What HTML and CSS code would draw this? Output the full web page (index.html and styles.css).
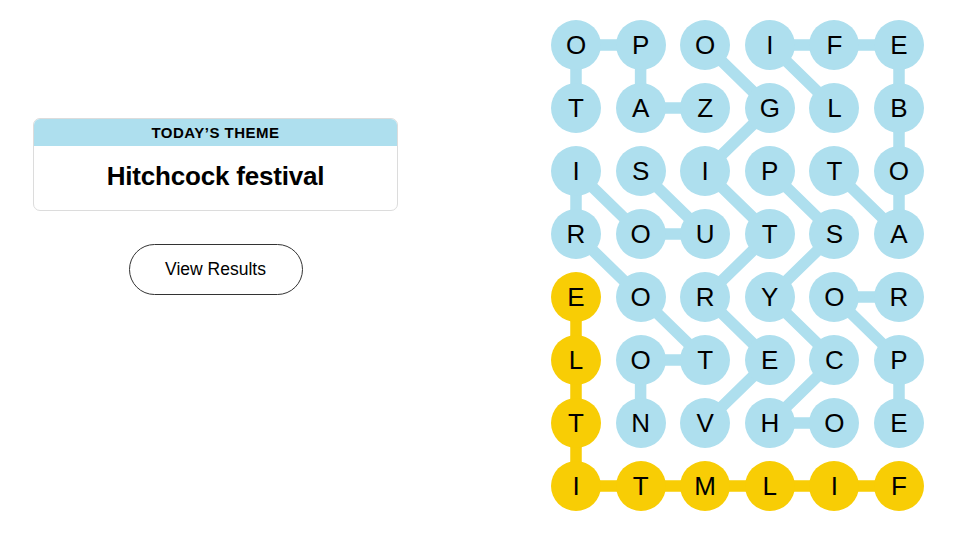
FILE: index.html
```html
<!DOCTYPE html>
<html lang="en">
  <head>
    <meta charset="UTF-8" />
    <meta name="viewport" content="width=device-width, initial-scale=1.0" />
    <title>Strands</title>
    <link rel="stylesheet" href="styles.css">
  </head>
  <body>
    <main class="game">
      <section class="side">
        <div class="theme-card">
          <h2 class="theme-label">TODAY’S THEME</h2>
          <h1 class="theme-title">Hitchcock festival</h1>
        </div>
        <button class="results-btn">View Results</button>
      </section>

      <section class="board">
        <!-- Found word paths, drawn behind the letters -->
        <svg class="paths" viewBox="0 0 373 491" aria-hidden="true">
          <g class="path-blue">
            <polyline points="25,88 25,25 89.6,25 89.6,88 154.2,88" />
            <polyline points="154.2,403 218.8,340 154.2,277 218.8,214 154.2,151 218.8,88 154.2,25" />
            <polyline points="283.4,88 218.8,25 283.4,25 348,25 348,88 348,151 348,214 283.4,151" />
            <polyline points="89.6,403 89.6,340 154.2,340 89.6,277 25,214 25,151 89.6,214 154.2,214 89.6,151" />
            <polyline points="218.8,151 283.4,214 218.8,277 283.4,340 218.8,403 283.4,403" />
            <polyline points="348,277 283.4,277 348,340 348,403" />
          </g>
          <g class="path-yellow">
            <polyline points="348,466 283.4,466 218.8,466 154.2,466 89.6,466 25,466 25,403 25,340 25,277" />
          </g>
        </svg>

        <div class="grid">
          <span class="cell found">O</span><span class="cell found">P</span><span class="cell found">O</span><span class="cell found">I</span><span class="cell found">F</span><span class="cell found">E</span>
          <span class="cell found">T</span><span class="cell found">A</span><span class="cell found">Z</span><span class="cell found">G</span><span class="cell found">L</span><span class="cell found">B</span>
          <span class="cell found">I</span><span class="cell found">S</span><span class="cell found">I</span><span class="cell found">P</span><span class="cell found">T</span><span class="cell found">O</span>
          <span class="cell found">R</span><span class="cell found">O</span><span class="cell found">U</span><span class="cell found">T</span><span class="cell found">S</span><span class="cell found">A</span>
          <span class="cell spangram">E</span><span class="cell found">O</span><span class="cell found">R</span><span class="cell found">Y</span><span class="cell found">O</span><span class="cell found">R</span>
          <span class="cell spangram">L</span><span class="cell found">O</span><span class="cell found">T</span><span class="cell found">E</span><span class="cell found">C</span><span class="cell found">P</span>
          <span class="cell spangram">T</span><span class="cell found">N</span><span class="cell found">V</span><span class="cell found">H</span><span class="cell found">O</span><span class="cell found">E</span>
          <span class="cell spangram">I</span><span class="cell spangram">T</span><span class="cell spangram">M</span><span class="cell spangram">L</span><span class="cell spangram">I</span><span class="cell spangram">F</span>
        </div>
      </section>
    </main>
  </body>
</html>
```

FILE: styles.css
```css
:root {
  --blue: #aedfee;
  --yellow: #f8cd05;
  --ink: #000;
  --border: #dcdcdc;
}

body {
  margin: 0;
  font-family: "Liberation Sans", Arial, sans-serif;
  color: var(--ink);
  background: #fff;
}

.game {
  display: flex;
  align-items: flex-start;
  padding: 20px 0 0 33px;
}

/* Left column: theme card + results button */
.side {
  width: 365px;
  padding-top: 98px;
  display: flex;
  flex-direction: column;
  align-items: center;
}

.theme-card {
  width: 100%;
  box-sizing: border-box;
  border: 1px solid var(--border);
  border-radius: 7px;
  overflow: hidden;
  text-align: center;
}

.theme-label {
  margin: 0;
  height: 27px;
  line-height: 28px;
  background: var(--blue);
  font-size: 15px;
  font-weight: 700;
  letter-spacing: 0.5px;
}

.theme-title {
  margin: 0;
  height: 64px;
  line-height: 60px;
  font-size: 26px;
  font-weight: 700;
  letter-spacing: -0.2px;
}

.results-btn {
  margin-top: 33px;
  width: 174px;
  height: 51px;
  border: 1px solid #333;
  border-radius: 26px;
  background: #fff;
  font-family: inherit;
  font-size: 17.5px;
  color: var(--ink);
  cursor: pointer;
}

/* Board */
.board {
  position: relative;
  margin-left: 153px;
  width: 373px;
  height: 491px;
}

.paths {
  position: absolute;
  inset: 0;
  width: 100%;
  height: 100%;
}

.paths polyline {
  fill: none;
  stroke-width: 11.5;
  stroke-linejoin: round;
  stroke-linecap: round;
}

.path-blue polyline {
  stroke: var(--blue);
}

.path-yellow polyline {
  stroke: var(--yellow);
}

.grid {
  position: relative;
  display: grid;
  grid-template-columns: repeat(6, 50px);
  grid-auto-rows: 50px;
  column-gap: 14.6px;
  row-gap: 13px;
}

.cell {
  display: flex;
  align-items: center;
  justify-content: center;
  border-radius: 50%;
  font-size: 26px;
  line-height: 1;
}

.cell.found {
  background: var(--blue);
}

.cell.spangram {
  background: var(--yellow);
}
```
